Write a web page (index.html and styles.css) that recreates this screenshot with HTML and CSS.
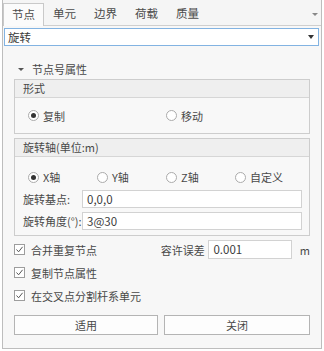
FILE: index.html
```html
<!DOCTYPE html>
<html>
<head>
<meta charset="utf-8">
<link rel="stylesheet" href="styles.css">
</head>
<body>
<div class="win">
  <div class="tabs">
    <div class="tab active">节点</div>
    <div class="tab">单元</div>
    <div class="tab">边界</div>
    <div class="tab">荷载</div>
    <div class="tab">质量</div>
    <div class="tab-spacer"></div>
    <i class="tri tab-tri"></i>
  </div>
  <div class="combo"><span>旋转</span><i class="tri combo-tri"></i></div>
  <div class="content">
    <div class="sec"><i class="tri sec-tri"></i><span>节点号属性</span></div>
    <div class="group">
      <div class="ghead">形式</div>
      <div class="gbody g1">
        <div class="radios two">
          <label class="radio on"><i class="dot"></i>复制</label>
          <label class="radio"><i class="dot"></i>移动</label>
        </div>
      </div>
    </div>
    <div class="group g2wrap">
      <div class="ghead">旋转轴(单位:m)</div>
      <div class="gbody g2">
        <div class="radios four">
          <label class="radio on"><i class="dot"></i>X轴</label>
          <label class="radio"><i class="dot"></i>Y轴</label>
          <label class="radio"><i class="dot"></i>Z轴</label>
          <label class="radio"><i class="dot"></i>自定义</label>
        </div>
        <div class="frow"><span class="flabel">旋转基点:</span><div class="input wide">0,0,0</div></div>
        <div class="frow"><span class="flabel">旋转角度(°):</span><div class="input wide">3@30</div></div>
      </div>
    </div>
    <div class="checks">
      <div class="crow">
        <label class="check first"><i class="box"><svg width="9" height="9" viewBox="0 0 9 9"><polyline points="1.5,4.5 3.6,6.8 7.6,1.8" fill="none" stroke="#555" stroke-width="1"/></svg></i>合并重复节点</label>
        <span class="tol">容许误差</span>
        <div class="input tolin">0.001</div>
        <span class="unit">m</span>
      </div>
      <div class="crow">
        <label class="check"><i class="box"><svg width="9" height="9" viewBox="0 0 9 9"><polyline points="1.5,4.5 3.6,6.8 7.6,1.8" fill="none" stroke="#555" stroke-width="1"/></svg></i>复制节点属性</label>
      </div>
      <div class="crow">
        <label class="check"><i class="box"><svg width="9" height="9" viewBox="0 0 9 9"><polyline points="1.5,4.5 3.6,6.8 7.6,1.8" fill="none" stroke="#555" stroke-width="1"/></svg></i>在交叉点分割杆系单元</label>
      </div>
    </div>
    <div class="buttons">
      <div class="btn">适用</div>
      <div class="btn">关闭</div>
    </div>
  </div>
</div>
</body>
</html>
```

FILE: styles.css
```css
* { box-sizing: border-box; }
html, body { margin: 0; padding: 0; background: #ffffff; }
body {
  font-family: "Noto Sans CJK SC", "Noto Sans", sans-serif;
  font-size: 11px;
  color: #484848;
}
.win {
  margin-left: 2px;
  width: 320px;
  height: 349px;
  background: #f7f7f7;
  border-left: 1px solid #bdbdbd;
  border-right: 1px solid #bdbdbd;
  border-bottom: 1px solid #bdbdbd;
}
.tabs {
  height: 26px;
  display: flex;
  align-items: flex-end;
  border-bottom: 1px solid #cfcfcf;
  background: #f5f5f5;
  position: relative;
}
.tab {
  width: 41px;
  height: 22px;
  line-height: 21px;
  text-align: center;
  color: #4a4a4a;
  font-size: 11.5px;
}
.tab.active {
  background: #fbfbfb;
  border: 1px solid #c9c9c9;
  border-bottom: none;
  height: 23px;
  margin-bottom: -1px;
}
.tab-spacer { flex: 1; }
.tri {
  display: block;
  width: 0;
  height: 0;
  border-left: 3px solid transparent;
  border-right: 3px solid transparent;
  border-top: 3px solid #888;
}
.tab-tri {
  align-self: center;
  margin-right: 3px;
  margin-top: 4px;
}
.combo {
  margin: 2px 2px 0 1px;
  height: 18px;
  background: #ffffff;
  border: 1px solid #82b3e2;
  display: flex;
  align-items: center;
  padding: 0 4px 0 3px;
}
.combo span { flex: 1; color: #3a3a3a; font-size: 11.5px; }
.combo-tri { border-top-color: #333; border-left-width: 3.5px; border-right-width: 3.5px; border-top-width: 4px; }
.content { padding: 0 11px; }
.sec {
  height: 16px;
  margin-top: 15px;
  display: flex;
  align-items: center;
  padding-left: 4px;
}
.sec-tri { border-top-color: #555; margin-right: 8px; margin-top: 1px; }
.group {
  margin-top: 2px;
  border: 1px solid #cdcdcd;
  background: #f8f8f8;
}
.g2wrap { margin-top: 4px; }
.ghead {
  height: 18px;
  line-height: 17px;
  background: #efefef;
  border-bottom: 1px solid #d6d6d6;
  padding-left: 8px;
}
.gbody.g1 {
  height: 35px;
  display: flex;
  align-items: center;
  padding-left: 13px;
}
.gbody.g2 {
  padding: 12px 7px 5px 0;
}
.radios { display: grid; align-items: center; height: 16px; }
.radios.two { grid-template-columns: 138px 138px; }
.radios.four { grid-template-columns: 69px 69px 69px 69px; padding-left: 13px; }
.radio { display: flex; align-items: center; }
.dot {
  width: 11px;
  height: 11px;
  border-radius: 50%;
  border: 1px solid #ababab;
  background: #ffffff;
  margin-right: 4px;
  position: relative;
  display: block;
}
.radio.on .dot::after {
  content: "";
  position: absolute;
  left: 2px;
  top: 2px;
  width: 5px;
  height: 5px;
  border-radius: 50%;
  background: #333;
}
.frow {
  display: flex;
  align-items: center;
  margin-top: 5px;
  padding-left: 8px;
}
.frow + .frow { margin-top: 4px; }
.flabel { width: 59px; white-space: nowrap; }
.input {
  height: 18px;
  background: #ffffff;
  border: 1px solid #d2d2d2;
  line-height: 16px;
  padding-left: 4px;
  color: #3a3a3a;
  font-size: 11.5px;
}
.input.wide { width: 220px; }
.checks { margin-top: 2px; }
.crow {
  height: 23px;
  display: flex;
  align-items: center;
}
.crow:first-child .input { height: 19px; line-height: 17px; }
.check { display: flex; align-items: center; }
.check.first { width: 148px; }
.box {
  width: 11px;
  height: 11px;
  border: 1px solid #9d9d9d;
  background: #ffffff;
  margin-right: 6px;
  display: flex;
  align-items: center;
  justify-content: center;
}
.tol { width: 48px; }
.tolin { width: 84px; }
.unit { margin-left: 8px; }
.buttons {
  margin-top: 8px;
  display: grid;
  grid-template-columns: 144px 146px;
  column-gap: 6px;
}
.btn {
  height: 20px;
  line-height: 18px;
  text-align: center;
  background: #fdfdfd;
  border: 1px solid #b4b4b4;
}
```
